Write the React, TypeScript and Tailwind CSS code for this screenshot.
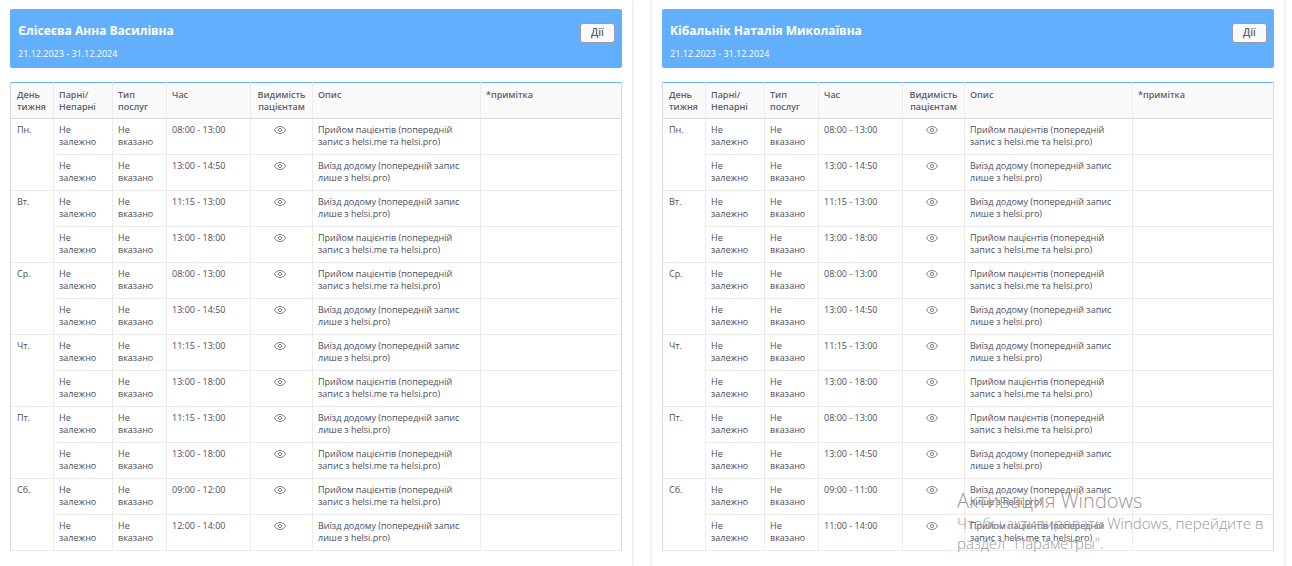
type Slot = {
  time: string
  kind: 'visit' | 'home'
}

type Day = {
  label: string
  slots: Slot[]
}

type Schedule = {
  doctor: string
  period: string
  days: Day[]
}

const DESCRIPTIONS = {
  visit: 'Прийом пацієнтів (попередній запис з helsi.me та helsi.pro)',
  home: 'Виїзд додому (попередній запис лише з helsi.pro)',
}

const morning: Slot[] = [
  { time: '08:00 - 13:00', kind: 'visit' },
  { time: '13:00 - 14:50', kind: 'home' },
]

const evening: Slot[] = [
  { time: '11:15 - 13:00', kind: 'home' },
  { time: '13:00 - 18:00', kind: 'visit' },
]

const schedules: Schedule[] = [
  {
    doctor: 'Єлісеєва Анна Василівна',
    period: '21.12.2023 - 31.12.2024',
    days: [
      { label: 'Пн.', slots: morning },
      { label: 'Вт.', slots: evening },
      { label: 'Ср.', slots: morning },
      { label: 'Чт.', slots: evening },
      { label: 'Пт.', slots: evening },
      {
        label: 'Сб.',
        slots: [
          { time: '09:00 - 12:00', kind: 'visit' },
          { time: '12:00 - 14:00', kind: 'home' },
        ],
      },
    ],
  },
  {
    doctor: 'Кібальнік Наталія Миколаївна',
    period: '21.12.2023 - 31.12.2024',
    days: [
      { label: 'Пн.', slots: morning },
      { label: 'Вт.', slots: evening },
      { label: 'Ср.', slots: morning },
      { label: 'Чт.', slots: evening },
      { label: 'Пт.', slots: morning },
      {
        label: 'Сб.',
        slots: [
          { time: '09:00 - 11:00', kind: 'home' },
          { time: '11:00 - 14:00', kind: 'visit' },
        ],
      },
    ],
  },
]

const TH = 'border-r border-b border-r-[#ececee] border-b-[#d9d9e0] px-[5px] pt-[7px] pb-[5px] font-semibold shadow-[inset_0_1px_0_#62b0fd] first:pl-1.5 last:border-r-0'
const TD = 'border-r border-b border-[#ececee] px-[5px] pt-[5px] pb-1.5 last:border-r-0'

function EyeIcon() {
  return (
    <svg
      viewBox="0 0 12 8"
      className="mx-auto mt-0.5 h-2 w-3"
      fill="none"
      stroke="#7c7c88"
      role="img"
      aria-label="Видимий"
    >
      <path d="M.5 4C1.8 1.7 3.7.5 6 .5S10.2 1.7 11.5 4C10.2 6.3 8.3 7.5 6 7.5S1.8 6.3.5 4Z" />
      <circle cx="6" cy="4" r="1.6" />
    </svg>
  )
}

function ScheduleCard({ schedule }: { schedule: Schedule }) {
  return (
    <section className="bg-white px-2.5 pt-[9px] pb-4 shadow-[0_0_4px_rgba(0,0,0,0.16)]">
      <header className="flex items-start justify-between rounded-xs bg-[#62b0fd] px-2 pt-3.5 pb-2 text-white">
        <div>
          <h2 className="text-[12px] leading-4 font-bold">{schedule.doctor}</h2>
          <p className="mt-2 text-[9px] leading-[13px]">{schedule.period}</p>
        </div>
        <button
          type="button"
          className="-mr-px h-5 w-[35px] rounded-[3px] border border-[#9a9aa6] bg-[#fafafa] pb-0.5 text-[10px] leading-4 font-semibold text-[#5a5a68]"
        >
          Дії
        </button>
      </header>

      <div className="mt-3.5 border-x border-[#d9d9e0]">
        <table className="w-full table-fixed border-separate border-spacing-0 text-left align-top text-[9px] leading-3 text-[#4d4d60]">
          <colgroup>
            <col className="w-[43px]" />
            <col className="w-[59px]" />
            <col className="w-[54px]" />
            <col className="w-[84px]" />
            <col className="w-[62px]" />
            <col className="w-[168px]" />
            <col />
          </colgroup>
          <thead className="bg-[#fafafa] align-top text-[#5f5f6c]">
            <tr>
              <th className={TH}>День тижня</th>
              <th className={TH}>Парні/ Непарні</th>
              <th className={TH}>Тип послуг</th>
              <th className={TH}>Час</th>
              <th className={`${TH} text-center`}>Видимість пацієнтам</th>
              <th className={TH}>Опис</th>
              <th className={TH}>*примітка</th>
            </tr>
          </thead>
          <tbody className="align-top">
            {schedule.days.map((day) =>
              day.slots.map((slot, i) => (
                <tr key={day.label + slot.time}>
                  {i === 0 && (
                    <td rowSpan={day.slots.length} className={`${TD} pl-1.5`}>
                      {day.label}
                    </td>
                  )}
                  <td className={TD}>Не залежно</td>
                  <td className={TD}>Не вказано</td>
                  <td className={TD}>{slot.time}</td>
                  <td className={`${TD} pr-2`}>
                    <EyeIcon />
                  </td>
                  <td className={TD}>{DESCRIPTIONS[slot.kind]}</td>
                  <td className={TD} />
                </tr>
              ))
            )}
          </tbody>
        </table>
      </div>
    </section>
  )
}

export default function App() {
  return (
    <div className="relative grid min-h-screen grid-cols-2 gap-5 overflow-hidden bg-white pr-2 font-['Open_Sans',sans-serif]">
      {schedules.map((schedule) => (
        <ScheduleCard key={schedule.doctor} schedule={schedule} />
      ))}

      {/* system activation notice over the page */}
      <div className="pointer-events-none absolute right-6 bottom-3.5 w-[311px] text-[#989898]">
        <p className="text-[20px] leading-6 font-light">Активация Windows</p>
        <p className="text-[15px] leading-5 font-light">
          Чтобы активировать Windows, перейдите в раздел "Параметры".
        </p>
      </div>
    </div>
  )
}
